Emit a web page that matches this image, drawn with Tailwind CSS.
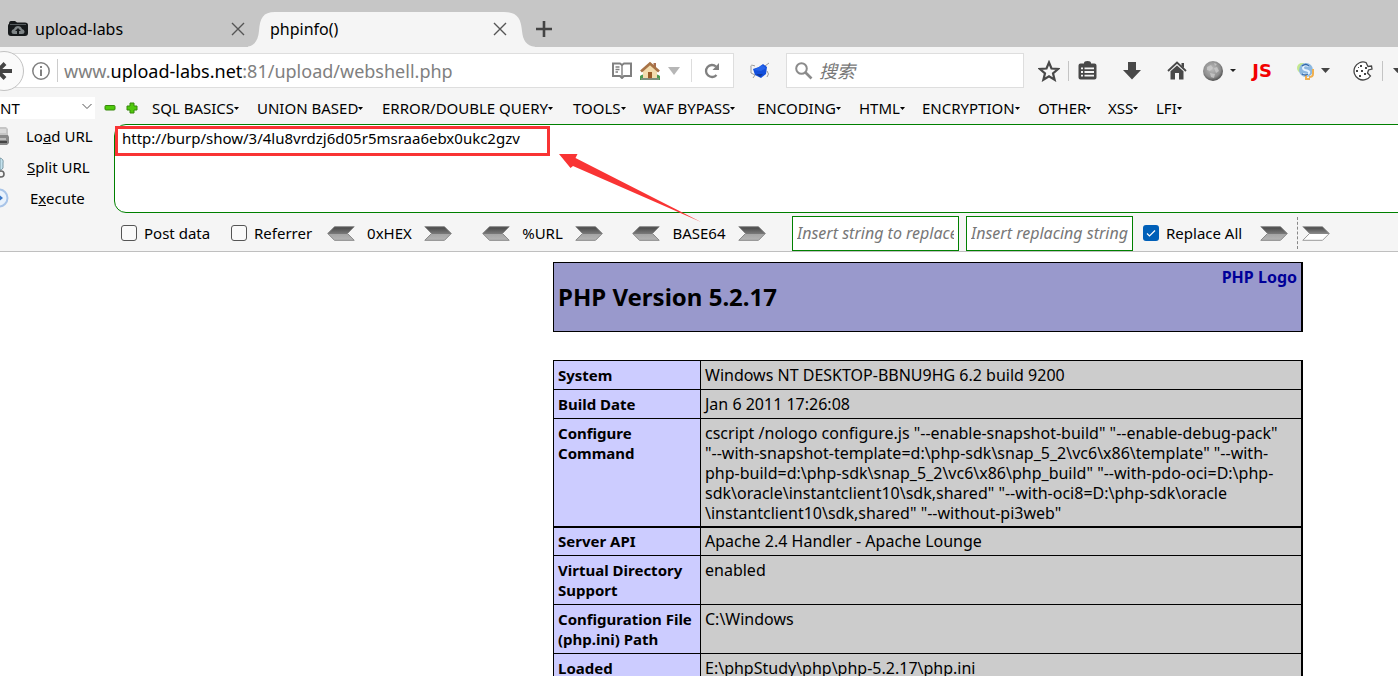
<!DOCTYPE html>
<html lang="zh">
<head>
<meta charset="utf-8">
<title>phpinfo()</title>
<script src="https://cdn.jsdelivr.net/npm/@tailwindcss/browser@4"></script>
</head>
<body class="min-h-screen overflow-hidden bg-white font-['Noto_Sans','Noto_Sans_CJK_SC',sans-serif] text-[15px] leading-5 text-black">
<svg class="absolute h-0 w-0" aria-hidden="true">
  <defs>
    <linearGradient id="steel" x1="0" y1="0" x2="0" y2="1"><stop offset="0" stop-color="#444"/><stop offset=".5" stop-color="#777"/><stop offset=".55" stop-color="#a5a5a5"/><stop offset="1" stop-color="#b5b5b5"/></linearGradient>
    <linearGradient id="steelw" x1="0" y1="0" x2="0" y2="1"><stop offset="0" stop-color="#444"/><stop offset=".5" stop-color="#888"/><stop offset=".55" stop-color="#fff"/><stop offset="1" stop-color="#fff"/></linearGradient>
    <radialGradient id="ball" cx=".45" cy=".4" r=".6"><stop offset="0" stop-color="#bcbcbc"/><stop offset=".7" stop-color="#8e8e8e"/><stop offset="1" stop-color="#505050"/></radialGradient>
    <symbol id="right" viewBox="0 0 28 15"><path d="M.8.7H20.500L27.300 7.500 20.500 14.300H.8L7.500 7.500Z" fill="url(#steel)" stroke="#888"/></symbol>
    <symbol id="left" viewBox="0 0 28 15"><path d="M27.200.7H7.500L.7 7.500 7.500 14.300H27.200L20.500 7.500Z" fill="url(#steel)" stroke="#888"/></symbol>
    <symbol id="close" viewBox="0 0 14 14"><path d="M1 1 13 13M13 1 1 13" stroke="#555" stroke-width="1.400"/></symbol>
  </defs>
</svg>

<header class="flex h-[47px] bg-[#c6c6c6] text-base leading-5">
  <div class="flex w-[248px] shrink-0 items-center pt-2.5 pl-2">
    <svg class="mr-[7px] h-5 w-5 shrink-0" viewBox="0 0 20 20"><path d="M1 5Q1 2 3 2H7L9 3.500H17Q20 3.500 20 6V14Q20 17 17 17H3Q0 17 0 14V7Q0 5 1 5Z" fill="#16191b"/><path d="M2 5.500H18" stroke="#555b5e"/><path d="M6 15Q3.500 15 3.500 12.500 3.500 10.500 6 10 7 7 10 7 13 7 14 10 16.500 10.500 16.500 12.500 16.500 15 14 15Z" fill="#7f8587"/><path d="M10 9 7 12H9V15H11V12H13Z" fill="#16191b"/></svg>
    <span>upload-labs</span>
    <button class="mr-[3px] ml-auto" aria-label="Close upload-labs"><svg class="h-3.5 w-3.5"><use href="#close"/></svg></button>
  </div>
  <div class="relative flex w-[287px] shrink-0 items-center pt-2.5 pr-7 pl-[22px]">
    <svg class="absolute inset-x-0 top-0 h-full w-full" viewBox="0 0 287 47" preserveAspectRatio="none"><path d="M-4 47C6 47 10 41 11 31 12 18 15 12 27 12H256C269 12 273 18 274 31 275 41 279 47 290 47Z" fill="#f5f5f5"/></svg>
    <span class="relative">phpinfo()</span>
    <button class="relative ml-auto" aria-label="Close phpinfo()"><svg class="h-3.5 w-3.5"><use href="#close"/></svg></button>
  </div>
  <button class="mt-2.5 ml-px" aria-label="New tab"><svg class="h-4 w-4" viewBox="0 0 16 16"><path d="M8 0V16M0 8H16" stroke="#444" stroke-width="2.600"/></svg></button>
</header>

<nav class="flex h-[47px] items-center bg-[#f5f5f5]">
  <div class="flex h-[35px] w-[734px] shrink-0 items-center border border-[#dedede] bg-white">
    <button class="-ml-[17px] flex h-10 w-10 shrink-0 items-center justify-center rounded-full border border-[#c2c2c2] bg-[#fafafa]" aria-label="Back"><svg class="h-5 w-5" viewBox="0 0 20 20"><path d="M18 10H4M11 2.500 3.500 10 11 17.500" fill="none" stroke="#444" stroke-width="4"/></svg></button>
    <svg class="ml-2 h-[18px] w-[18px] shrink-0" viewBox="0 0 18 18"><circle cx="9" cy="9" r="8.200" fill="none" stroke="#808080" stroke-width="1.500"/><path d="M9 4V6M9 7.500V14" stroke="#808080" stroke-width="2"/></svg>
    <div class="mr-1.5 ml-[7px] h-[23px] w-px bg-[#ccc]"></div>
    <div class="flex-1 text-lg leading-6 whitespace-nowrap text-[#808080]">www.<span class="text-black">upload-labs.net</span>:81/upload/webshell.php</div>
    <button aria-label="Reader view"><svg class="h-[17px] w-5" viewBox="0 0 20 17"><path d="M1 1.500H8L10 3 12 1.500H19V14H12L10 16 8 14H1Z" fill="none" stroke="#808080" stroke-width="2"/><path d="M10 3V15M3.500 5H7.500M3.500 7.500H7.500M3.500 10H6" stroke="#808080" stroke-width="1.400"/></svg></button>
    <button class="ml-2" aria-label="Home shortcut"><svg class="h-5 w-5" viewBox="0 0 20 20"><path d="M0 15Q3 12 6 15L14 15Q17 12 20 15V19H0Z" fill="#4c9a52"/><path d="M3 9 10 3 17 9V17H3Z" fill="#f2dcae"/><path d="M8 11H12V18H8Z" fill="#9a5c28"/><path d="M13.500 2H16V6H13.500Z" fill="#a96f50"/><path d="M1 10.500 10 2.500 19 10.500" fill="none" stroke="#a87346" stroke-width="2.800"/><path d="M1 18H19" stroke="#8c8c8c" stroke-width="1.500"/></svg></button>
    <svg class="ml-2 h-2 w-3" viewBox="0 0 12 8"><path d="M0 0H12L6 8Z" fill="#b6b6b6"/></svg>
    <div class="ml-[11px] h-[23px] w-px bg-[#ddd]"></div>
    <button class="mr-[13px] ml-3" aria-label="Reload"><svg class="h-4 w-4" viewBox="0 0 16 16"><path d="M12.500 12A6 6 0 1 1 12 3.500" fill="none" stroke="#808080" stroke-width="2.300"/><path d="M15 0V7H8.500Z" fill="#808080"/></svg></button>
  </div>
  <button class="ml-4 shrink-0" aria-label="Hackbar"><svg class="h-5 w-5" viewBox="0 0 20 20"><path d="M1 6Q0 3 5 5M19 2 15 5M1 6V12L5 14M3 17 5 14M17 10Q20 13 17 16" fill="none" stroke="#999"/><path d="M3 8 9 6 13 3 17 6 16 13 11 17 5 14Z" fill="#124fdc"/><path d="M4 9 12 4 16 7 11 10Z" fill="#2563ea"/><path d="M6 13 10 16 13 13Z" fill="#113a9c"/></svg></button>
  <label class="ml-4 flex h-[35px] min-w-0 flex-1 items-center border border-[#dedede] bg-white pl-2">
    <svg class="mr-1.5 h-[18px] w-[18px] shrink-0" viewBox="0 0 18 18"><circle cx="6.500" cy="6.500" r="5.300" fill="none" stroke="#8b8b8b" stroke-width="2"/><path d="M10.500 10.500 16.500 16.500" stroke="#8b8b8b" stroke-width="2.600"/></svg>
    <input type="search" aria-label="搜索" placeholder="搜索" class="min-w-0 flex-1 text-lg italic outline-none placeholder:text-[#777]">
  </label>
  <div class="flex h-full shrink-0 items-center">
    <button class="ml-3.5" aria-label="Bookmark"><svg class="h-[22px] w-[22px]" viewBox="0 0 22 22"><path d="M11 2.500 13.500 8.500 20 9 15 13.300 16.600 19.700 11 16.200 5.400 19.700 7 13.300 2 9 8.500 8.500Z" fill="none" stroke="#484848" stroke-width="2.200"/></svg></button>
    <div class="ml-2 h-5 w-px bg-[#c4c4c4]"></div>
    <button class="ml-[9px]" aria-label="Bookmarks list"><svg class="h-[19px] w-[19px]" viewBox="0 0 19 19"><path d="M6 2.500V2Q6 0 9.500 0T13 2V2.500H16.500Q18.500 2.500 18.500 4.500V16.500Q18.500 18.500 16.500 18.500H2.500Q.5 18.500.5 16.500V4.500Q.5 2.500 2.500 2.500Z" fill="#484848"/><path d="M3 7.300H5M6.500 7.300H16M3 11H5M6.500 11H16M3 14.700H5M6.500 14.700H16" stroke="#f5f5f5" stroke-width="1.800"/></svg></button>
    <button class="ml-[26px]" aria-label="Downloads"><svg class="h-[19px] w-[18px]" viewBox="0 0 18 19"><path d="M5 1H13V9H18L9 18.500 0 9H5Z" fill="#484848"/></svg></button>
    <button class="ml-[26px]" aria-label="Home"><svg class="h-[19px] w-5" viewBox="0 0 20 19"><path d="M1 10 10 1.500 19 10" fill="none" stroke="#484848" stroke-width="1.800"/><path d="M14.500 2H17V7L14.500 5ZM3.500 10.300 10 4.500 16.500 10.300V18.500H12V12H8V18.500H3.500Z" fill="#484848"/></svg></button>
    <button class="ml-4 flex items-center" aria-label="Proxy"><svg class="h-5 w-5" viewBox="0 0 20 20"><circle cx="10" cy="10" r="10" fill="url(#ball)"/><path d="M4 6 8 4 10 7 7 10 4 9ZM11 7 14 6 16 10 13 12ZM7 12 12 13 11 17 8 16ZM11 2 14 3 12 5Z" fill="#d0d0d0" opacity=".7"/></svg><svg class="ml-[7px] h-[3px] w-1.5" viewBox="0 0 6 3"><path d="M0 0H6L3 3Z" fill="#222"/></svg></button>
    <button class="ml-4 text-center font-['DejaVu_Sans','Noto_Sans',sans-serif] text-lg leading-5 font-bold text-[#f20000]">JS</button>
    <button class="ml-[25px] flex items-center" aria-label="Sessions"><svg class="h-[18px] w-[18px]" viewBox="0 0 18 18"><circle cx="5" cy="6" r="5" fill="#c4e88e"/><circle cx="9" cy="8" r="7" fill="#8db8df"/><path d="M12 4Q6 2 6 6 6 8 10 8.500 14 10 11 12 9 13.500 6 12" fill="none" stroke="#e5f2ff" stroke-width="2"/><path d="M16 7V12Q16 15 12 15M9 13V17H13" fill="none" stroke="#f0b050" stroke-width="2"/><path d="M5 4Q9 1 12 4M5 12Q8 14 11 12" fill="none" stroke="#3267a9" stroke-width="1.300"/></svg><svg class="ml-1.5 h-[5px] w-[9px]" viewBox="0 0 9 5"><path d="M0 0H9L4.500 5Z" fill="#444"/></svg></button>
    <button class="ml-[23px]" aria-label="Cookies"><svg class="h-5 w-5" viewBox="0 0 20 20"><path d="M13 1.500A9 9 0 1 0 17.500 15L14.500 12 15.500 9 19 8 18.500 5 15 5.500Z" fill="#fff" stroke="#444" stroke-width="1.300"/><path d="M7 4H9V6H7ZM3 9H5V11H3ZM8 9H10V11H8ZM12 6H14V8H12ZM6 14H8V16H6ZM11 12H13V14H11ZM5 6H6V7H5Z" fill="#444"/></svg></button>
    <div class="ml-[9px] h-5 w-px bg-[#c4c4c4]"></div>
    <svg class="ml-2.5 h-[5px] w-[5px]" viewBox="0 0 5 5"><path d="M0 0H9L4.500 5Z" fill="#444"/></svg>
  </div>
</nav>

<section class="border-b border-[#bfbfbf] bg-[#f5f5f5]">
  <div class="flex h-[30px] items-center pb-0.5">
    <div class="relative mr-[9px] h-[22px] w-[95px] shrink-0 overflow-hidden bg-white">
      <select aria-label="Database" class="h-full w-full appearance-none bg-white leading-[22px] outline-none"><option>NT</option></select>
      <svg class="pointer-events-none absolute top-1.5 right-[3px] h-[7px] w-2.5" viewBox="0 0 10 7"><path d="M.5 1 5 5.500 9.500 1" fill="none" stroke="#555"/></svg>
    </div>
    <button class="mr-2.5" aria-label="Remove"><svg class="h-3 w-3" viewBox="0 0 12 12"><rect x="1" y="3.500" width="10" height="4.500" rx="1" fill="#4fc90c" stroke="#36880b"/></svg></button>
    <button class="mr-3.5" aria-label="Add"><svg class="h-3 w-3" viewBox="0 0 12 12"><path d="M4 1H8V4H11V8H8V11H4V8H1V4H4Z" fill="#4fc90c" stroke="#36880b" stroke-linejoin="round"/></svg></button>
    <div class="grid grid-cols-[105px_125px_191px_70px_114px_102px_63px_116px_70px_48px_auto] text-left whitespace-nowrap">
      <button class="flex items-center">SQL BASICS<svg class="h-[3px] w-[5px]" viewBox="0 0 5 3"><path d="M0 0H5L2.500 3Z"/></svg></button>
      <button class="flex items-center">UNION BASED<svg class="h-[3px] w-[5px]" viewBox="0 0 5 3"><path d="M0 0H5L2.500 3Z"/></svg></button>
      <button class="flex items-center">ERROR/DOUBLE QUERY<svg class="h-[3px] w-[5px]" viewBox="0 0 5 3"><path d="M0 0H5L2.500 3Z"/></svg></button>
      <button class="flex items-center">TOOLS<svg class="h-[3px] w-[5px]" viewBox="0 0 5 3"><path d="M0 0H5L2.500 3Z"/></svg></button>
      <button class="flex items-center">WAF BYPASS<svg class="h-[3px] w-[5px]" viewBox="0 0 5 3"><path d="M0 0H5L2.500 3Z"/></svg></button>
      <button class="flex items-center">ENCODING<svg class="h-[3px] w-[5px]" viewBox="0 0 5 3"><path d="M0 0H5L2.500 3Z"/></svg></button>
      <button class="flex items-center">HTML<svg class="h-[3px] w-[5px]" viewBox="0 0 5 3"><path d="M0 0H5L2.500 3Z"/></svg></button>
      <button class="flex items-center">ENCRYPTION<svg class="h-[3px] w-[5px]" viewBox="0 0 5 3"><path d="M0 0H5L2.500 3Z"/></svg></button>
      <button class="flex items-center">OTHER<svg class="h-[3px] w-[5px]" viewBox="0 0 5 3"><path d="M0 0H5L2.500 3Z"/></svg></button>
      <button class="flex items-center">XSS<svg class="h-[3px] w-[5px]" viewBox="0 0 5 3"><path d="M0 0H5L2.500 3Z"/></svg></button>
      <button class="flex items-center">LFI<svg class="h-[3px] w-[5px]" viewBox="0 0 5 3"><path d="M0 0H5L2.500 3Z"/></svg></button>
    </div>
  </div>

  <div class="relative flex">
    <div class="-mt-px flex w-[114px] shrink-0 flex-col">
      <button class="flex h-[26px] items-center"><svg class="mr-4 h-5 w-2.5" viewBox="0 0 10 20"><path d="M0 1H6L8 3V10H0Z" fill="#c5c5c5"/><path d="M0 9H8L9 11V17L7 19H0Z" fill="#888"/><path d="M0 4H6M0 6H6M0 13H6" stroke="#eee"/><path d="M0 16H7" stroke="#444" stroke-width="2"/></svg><span>Lo<u>a</u>d URL</span></button>
      <button class="flex h-9 items-center"><svg class="mr-[17px] h-6 w-2.5" viewBox="0 0 10 24"><path d="M0 3Q4 4 3 8V13Q2 15 0 15Z" fill="#c4e2ee" stroke="#7c99a5"/><circle cx="1" cy="19" r="3" fill="none" stroke="#666" stroke-width="1.600"/></svg><span><u>S</u>plit URL</span></button>
      <button class="flex h-[26px] items-center"><svg class="mr-5 h-5 w-2.5" viewBox="0 0 10 20"><circle cx="-1" cy="10" r="8.500" fill="#e9f2fc" stroke="#a8c4e8" stroke-width="2"/><path d="M-2 6 3 10-2 14Z" fill="#3977c8"/></svg><span>E<u>x</u>ecute</span></button>
    </div>
    <textarea aria-label="URL" spellcheck="false" class="-mr-3 block h-[89px] min-w-0 flex-1 resize-none rounded-xl border border-[#008000] bg-white px-[7px] pt-[3px] leading-5 outline-none">http://burp/show/3/4lu8vrdzj6d05r5msraa6ebx0ukc2gzv</textarea>
    <div class="pointer-events-none absolute top-0.5 left-[115px] h-[30px] w-[435px] border-3 border-[#f93434]"></div>
    <svg class="pointer-events-none absolute top-[29px] left-[559px] h-[70px] w-[142px]" viewBox="0 0 142 70"><path d="M0 1H18.500L16.500 5 142 69 14 13 11.500 15Z" fill="#f93434"/></svg>
  </div>

  <div class="flex h-[38px] items-center pt-0.5 pl-[121px] whitespace-nowrap">
    <label class="flex w-[110px] shrink-0 items-center gap-[7px]"><input type="checkbox" class="h-4 w-4 appearance-none rounded-[3px] border border-[#555] bg-[#fafafa]">Post data</label>
    <label class="flex w-24 shrink-0 items-center gap-[7px]"><input type="checkbox" class="h-4 w-4 appearance-none rounded-[3px] border border-[#555] bg-[#fafafa]">Referrer</label>
    <div class="mr-[30px] flex w-[125px] shrink-0 items-center justify-between"><button aria-label="Decode hex"><svg class="h-[15px] w-7"><use href="#left"/></svg></button><span>0xHEX</span><button aria-label="Encode hex"><svg class="h-[15px] w-7"><use href="#right"/></svg></button></div>
    <div class="mr-[29px] flex w-[121px] shrink-0 items-center justify-between"><button aria-label="Decode URL"><svg class="h-[15px] w-7"><use href="#left"/></svg></button><span>%URL</span><button aria-label="Encode URL"><svg class="h-[15px] w-7"><use href="#right"/></svg></button></div>
    <div class="mr-[26px] flex w-[134px] shrink-0 items-center justify-between"><button aria-label="Decode Base64"><svg class="h-[15px] w-7"><use href="#left"/></svg></button><span>BASE64</span><button aria-label="Encode Base64"><svg class="h-[15px] w-7"><use href="#right"/></svg></button></div>
    <input type="text" aria-label="String to replace" placeholder="Insert string to replace" class="mr-[7px] h-[35px] w-[167px] shrink-0 border border-[#008000] bg-white px-1 text-base italic outline-none placeholder:text-[#777]">
    <input type="text" aria-label="Replacing string" placeholder="Insert replacing string" class="mr-2.5 h-[35px] w-[167px] shrink-0 border border-[#008000] bg-white px-1 text-base italic outline-none placeholder:text-[#777]">
    <label class="flex w-[117px] shrink-0 items-center gap-[7px]"><span class="relative flex"><input type="checkbox" checked class="h-4 w-4 appearance-none rounded-[3px] bg-[#005fb8]"><svg class="pointer-events-none absolute inset-0 h-4 w-4" viewBox="0 0 16 16"><path d="M4 8.500 6.500 11 12 5.500" fill="none" stroke="#fff" stroke-width="1.200"/></svg></span>Replace All</label>
    <button aria-label="Replace"><svg class="h-[15px] w-7"><use href="#right"/></svg></button>
    <div class="mr-1 ml-[9px] h-8 border-l border-dashed border-[#888]"></div>
    <button aria-label="Replace next"><svg class="h-[15px] w-7" viewBox="0 0 28 15"><path d="M.8.7H20.500L27.300 7.500 20.500 14.300H.8L7.500 7.500Z" fill="url(#steelw)" stroke="#999"/></svg></button>
  </div>
</section>

<main class="pt-2.5 pl-[458px]">
  <div class="mx-auto w-[750px]">
    <div class="flex h-[70px] items-start justify-between border border-r-2 border-black bg-[#9999cc] px-1 pt-1">
      <h1 class="pt-3.5 text-2xl leading-8 font-bold">PHP Version 5.2.17</h1>
      <a href="#logo" class="text-base leading-5 font-bold text-[#000099]">PHP Logo</a>
    </div>
    <table class="mt-7 w-full table-fixed border-separate border-spacing-0 border-t border-r-2 border-l border-black text-left align-top">
      <colgroup><col class="w-[146px]"><col></colgroup>
      <tbody class="[&_td]:border-b [&_td]:border-l [&_td]:border-black [&_td]:bg-[#ccc] [&_td]:px-1 [&_td]:pt-1 [&_td]:pb-1 [&_td]:align-top [&_td]:text-base [&_td]:leading-5 [&_th]:border-b [&_th]:border-black [&_th]:bg-[#ccccff] [&_th]:px-1 [&_th]:pt-1 [&_th]:pb-1 [&_th]:align-top [&_th]:font-bold">
        <tr><th scope="row">System</th><td>Windows NT DESKTOP-BBNU9HG 6.2 build 9200</td></tr>
        <tr><th scope="row">Build Date</th><td>Jan 6 2011 17:26:08</td></tr>
        <tr><th scope="row" class="border-b-2!">Configure<br>Command</th><td class="border-b-2! pb-[3px]! whitespace-nowrap">cscript /nologo configure.js "--enable-snapshot-build" "--enable-debug-pack"<br>"--with-snapshot-template=d:\php-sdk\snap_5_2\vc6\x86\template" "--with-<br>php-build=d:\php-sdk\snap_5_2\vc6\x86\php_build" "--with-pdo-oci=D:\php-<br>sdk\oracle\instantclient10\sdk,shared" "--with-oci8=D:\php-sdk\oracle<br>\instantclient10\sdk,shared" "--without-pi3web"</td></tr>
        <tr><th scope="row" class="pt-[3px]!">Server API</th><td class="pt-[3px]!">Apache 2.4 Handler - Apache Lounge</td></tr>
        <tr><th scope="row">Virtual Directory<br>Support</th><td>enabled</td></tr>
        <tr><th scope="row" class="whitespace-nowrap">Configuration File<br>(php.ini) Path</th><td>C:\Windows</td></tr>
        <tr><th scope="row">Loaded<br>Configuration File</th><td>E:\phpStudy\php\php-5.2.17\php.ini</td></tr>
      </tbody>
    </table>
  </div>
</main>
</body>
</html>
